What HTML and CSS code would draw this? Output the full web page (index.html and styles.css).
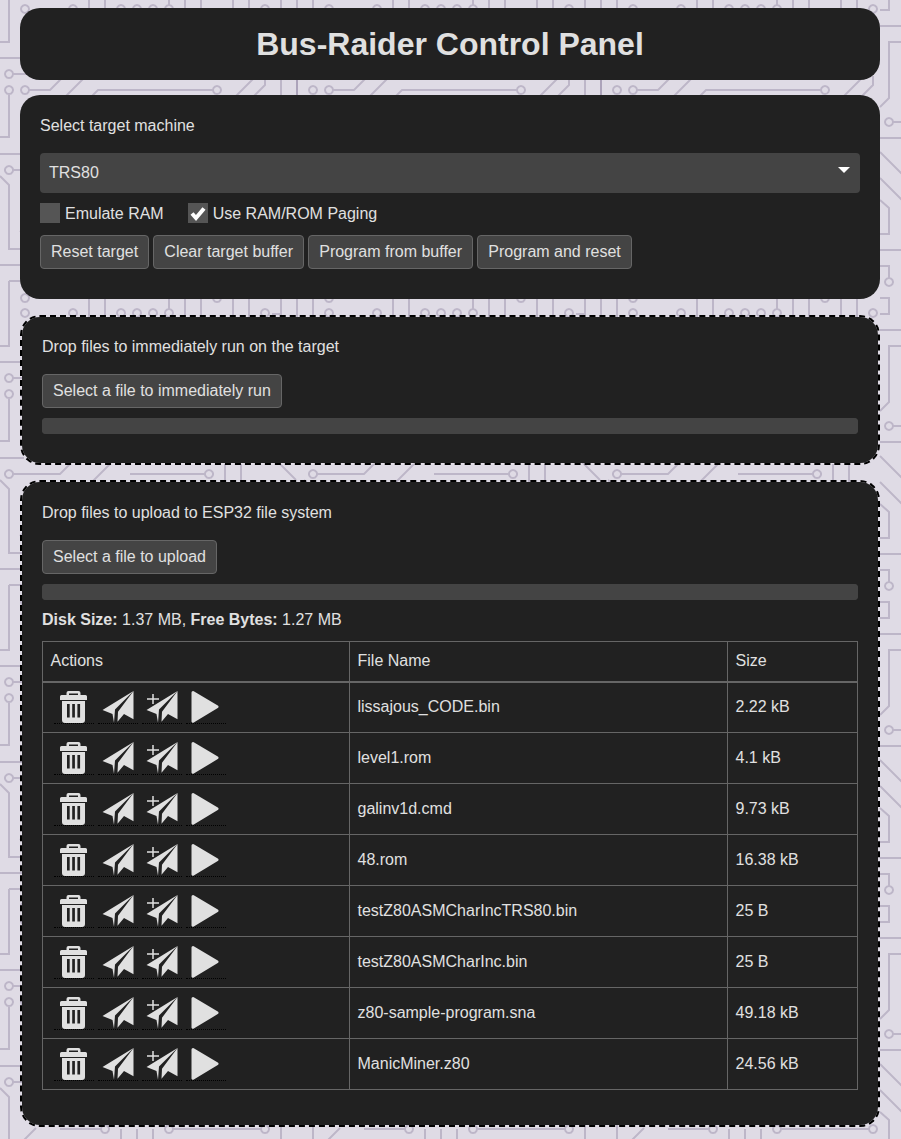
FILE: index.html
```html
<!doctype html>
<html>
  <head>
    <meta charset="utf-8">
    <meta name="viewport" content="width=device-width, initial-scale=1">
    <title>Bus-Raider Control Panel</title>
    <link rel="stylesheet" href="styles.css">
  </head>
  <body>
    <svg class="defs" width="0" height="0">
      <symbol id="i-trash" viewBox="0 0 40 33">
        <path fill-rule="evenodd" d="M12.500 5V3Q12.500 1 14.500 1H24.500Q26.500 1 26.500 3V5H31.500Q33 5 33 6.500V10H6V6.500Q6 5 7.500 5ZM15 5H24V3.500H15ZM8 11H31V30Q31 33 28 33H11Q8 33 8 30ZM13 14V27.500H15.700V14ZM18.200 14V27.500H20.900V14ZM23.400 14V27.500H26.100V14Z"/>
      </symbol>
      <symbol id="i-send" viewBox="0 0 40 33">
        <path d="M4.500 20 35.500 1 17 19.500 16 32.700 14.500 24Z"/>
        <path d="M35.500 1V29.300L26 24 19.500 31.700 20 21.700Z"/>
      </symbol>
      <symbol id="i-add" viewBox="0 0 40 33">
        <path d="M4.500 20 35.500 1 17 19.500 16 32.700 14.500 24Z"/>
        <path d="M35.500 1V29.300L26 24 19.500 31.700 20 21.700Z"/>
        <path d="M11 4V14M5 9H17" fill="none" stroke="#e0e0e0" stroke-width="1.500"/>
      </symbol>
      <symbol id="i-play" viewBox="0 0 40 33">
        <path d="M7 2.500 31 16.800 7 31.300Z" stroke="#e0e0e0" stroke-width="3" stroke-linejoin="round"/>
      </symbol>
    </svg>

    <header class="card title">
      <h1>Bus-Raider Control Panel</h1>
    </header>

    <section class="card machine">
      <p class="lead">Select target machine</p>
      <div class="select-wrap">
        <select id="machine">
          <option>TRS80</option>
        </select>
      </div>
      <div class="checks">
        <label class="check"><span class="box"></span>Emulate RAM</label>
        <label class="check"><span class="box"><svg width="20" height="20" viewBox="0 0 20 20"><path d="M4 10.500 8 15 16 5.500" fill="none" stroke="#fff" stroke-width="4"/></svg></span>Use RAM/ROM Paging</label>
      </div>
      <div class="buttons">
        <button>Reset target</button>
        <button>Clear target buffer</button>
        <button>Program from buffer</button>
        <button>Program and reset</button>
      </div>
    </section>

    <section class="card drop run-drop">
      <p class="lead">Drop files to immediately run on the target</p>
      <button>Select a file to immediately run</button>
      <progress value="0" max="100"></progress>
    </section>

    <section class="card drop fs-drop">
      <p class="lead">Drop files to upload to ESP32 file system</p>
      <button>Select a file to upload</button>
      <progress value="0" max="100"></progress>
      <p class="disk"><b>Disk Size:</b> 1.37 MB, <b>Free Bytes:</b> 1.27 MB</p>
      <table>
        <thead>
          <tr><th class="col-actions">Actions</th><th class="col-name">File Name</th><th>Size</th></tr>
        </thead>
        <tbody>
          <tr>
            <td><div class="actions"><a title="Delete"><svg><use href="#i-trash"/></svg></a><a title="Send"><svg><use href="#i-send"/></svg></a><a title="Add"><svg><use href="#i-add"/></svg></a><a title="Run"><svg><use href="#i-play"/></svg></a></div></td>
            <td>lissajous_CODE.bin</td><td>2.22 kB</td>
          </tr>
          <tr>
            <td><div class="actions"><a title="Delete"><svg><use href="#i-trash"/></svg></a><a title="Send"><svg><use href="#i-send"/></svg></a><a title="Add"><svg><use href="#i-add"/></svg></a><a title="Run"><svg><use href="#i-play"/></svg></a></div></td>
            <td>level1.rom</td><td>4.1 kB</td>
          </tr>
          <tr>
            <td><div class="actions"><a title="Delete"><svg><use href="#i-trash"/></svg></a><a title="Send"><svg><use href="#i-send"/></svg></a><a title="Add"><svg><use href="#i-add"/></svg></a><a title="Run"><svg><use href="#i-play"/></svg></a></div></td>
            <td>galinv1d.cmd</td><td>9.73 kB</td>
          </tr>
          <tr>
            <td><div class="actions"><a title="Delete"><svg><use href="#i-trash"/></svg></a><a title="Send"><svg><use href="#i-send"/></svg></a><a title="Add"><svg><use href="#i-add"/></svg></a><a title="Run"><svg><use href="#i-play"/></svg></a></div></td>
            <td>48.rom</td><td>16.38 kB</td>
          </tr>
          <tr>
            <td><div class="actions"><a title="Delete"><svg><use href="#i-trash"/></svg></a><a title="Send"><svg><use href="#i-send"/></svg></a><a title="Add"><svg><use href="#i-add"/></svg></a><a title="Run"><svg><use href="#i-play"/></svg></a></div></td>
            <td>testZ80ASMCharIncTRS80.bin</td><td>25 B</td>
          </tr>
          <tr>
            <td><div class="actions"><a title="Delete"><svg><use href="#i-trash"/></svg></a><a title="Send"><svg><use href="#i-send"/></svg></a><a title="Add"><svg><use href="#i-add"/></svg></a><a title="Run"><svg><use href="#i-play"/></svg></a></div></td>
            <td>testZ80ASMCharInc.bin</td><td>25 B</td>
          </tr>
          <tr>
            <td><div class="actions"><a title="Delete"><svg><use href="#i-trash"/></svg></a><a title="Send"><svg><use href="#i-send"/></svg></a><a title="Add"><svg><use href="#i-add"/></svg></a><a title="Run"><svg><use href="#i-play"/></svg></a></div></td>
            <td>z80-sample-program.sna</td><td>49.18 kB</td>
          </tr>
          <tr>
            <td><div class="actions"><a title="Delete"><svg><use href="#i-trash"/></svg></a><a title="Send"><svg><use href="#i-send"/></svg></a><a title="Add"><svg><use href="#i-add"/></svg></a><a title="Run"><svg><use href="#i-play"/></svg></a></div></td>
            <td>ManicMiner.z80</td><td>24.56 kB</td>
          </tr>
        </tbody>
      </table>
    </section>
  </body>
</html>
```

FILE: styles.css
```css
* {
  box-sizing: border-box;
}
html {
  background-color: #dfdbe5;
  background-image: url("data:image/svg+xml,%3Csvg xmlns='http://www.w3.org/2000/svg' width='304' height='304' fill='none' stroke='%239C92AC' stroke-opacity='.5' stroke-width='2'%3E%3Cpath d='M9 0V42H0M25 5a4 4 0 1 0 .01 0M73 5a4 4 0 1 0 .01 0M121 5a4 4 0 1 0 .01 0M137 5a4 4 0 1 0 .01 0M153 5a4 4 0 1 0 .01 0M169 5a4 4 0 1 0 .01 0M265 5a4 4 0 1 0 .01 0M169 0V5M89 0V20M105 0V20M185 0V20M201 0V20M233 0V20M249 0V20M297 0V20M89 290V304M105 290V304M185 290V304M201 290V304M233 290V304M249 290V304M297 290V304M169 296V304'/%3E%3Cpath d='M25 294a4 4 0 1 0 .01 0M217 294a4 4 0 1 0 .01 0'/%3E%3Cpath d='M0 58H24M9 70a4 4 0 1 0 .01 0M13 74H26M9 86a4 4 0 1 0 .01 0M25 86a4 4 0 1 0 .01 0M9 94V137H0M29 90H50L62 78M64 98 84 78M90 98 98 90H213M217 86a4 4 0 1 0 .01 0M234 98 254 78M265 76V85L254 96M297 76V100'/%3E%3Cpath d='M0 154H24M9 166a4 4 0 1 0 .01 0M13 170H60L70 160M90 180 110 160M130 170H205M209 166a4 4 0 1 0 .01 0M225 160V180M241 160V180M0 176 9 185V249H24M0 265H24M9 281H24M9 281V304'/%3E%3Cpath d='M105 213a4 4 0 1 0 .01 0M169 213a4 4 0 1 0 .01 0M265 213a4 4 0 1 0 .01 0M173 217H261M121 217V232M137 217V232M153 217V232M20 232 36 216M60 217H101'/%3E%3Cpath d='M281 0V10H272M272 26H304M304 42H281V98L272 107M281 118a4 4 0 1 0 .01 0M285 122H304M272 138H304M272 152 296 176M272 178 296 202M272 200 281 208V234H272M272 250H304M281 278V266H272M281 278a4 4 0 1 0 .01 0M272 298H281V304M297 76V100'/%3E%3C/svg%3E");
}
body {
  margin: 8px 21px 0 20px;
  font-family: "Liberation Sans", Arial, sans-serif;
  font-size: 16px;
  line-height: 20px;
  color: #e0e0e0;
}
.defs {
  display: block;
  height: 0;
}
.card {
  background: #212121;
  border-radius: 20px;
}
.title {
  height: 72px;
  margin-bottom: 15px;
  display: flex;
  align-items: center;
  justify-content: center;
}
h1 {
  margin: 0;
  font-size: 32px;
  line-height: 36px;
  font-weight: bold;
}
.machine {
  height: 204px;
  margin-bottom: 16px;
  padding: 20px;
}
.lead {
  margin: 0 0 17px;
  padding-top: 1px;
}
.select-wrap {
  position: relative;
  margin-bottom: 10px;
}
.select-wrap::after {
  content: "";
  position: absolute;
  top: 14px;
  right: 10px;
  border-left: 6px solid transparent;
  border-right: 6px solid transparent;
  border-top: 6px solid #fff;
}
select {
  display: block;
  width: 100%;
  height: 40px;
  padding: 0 9px;
  border: 0;
  border-radius: 4px;
  background: #444;
  color: #e0e0e0;
  font: inherit;
  appearance: none;
}
.checks {
  display: flex;
  gap: 24px;
  margin-bottom: 10px;
}
.check {
  display: flex;
  align-items: flex-start;
  gap: 5px;
  line-height: 22px;
}
.box {
  display: block;
  width: 20px;
  height: 20px;
  background: #555;
}
.box svg {
  display: block;
}
.buttons {
  display: flex;
  gap: 4.2px;
}
button {
  display: block;
  height: 34px;
  padding: 0 10px;
  border: 1px solid #666;
  border-radius: 4px;
  background: #444;
  color: #e0e0e0;
  font: inherit;
  cursor: pointer;
}
.drop {
  padding: 19px 20px 0;
  border: 2px dashed #000;
  background-clip: padding-box;
}
.run-drop {
  height: 150px;
  margin-bottom: 15px;
}
.fs-drop {
  height: 647px;
  padding-top: 20px;
}
progress {
  display: block;
  width: 100%;
  height: 16px;
  margin-top: 10px;
  border: 0;
  border-radius: 4px;
  background: #444;
  appearance: none;
}
progress::-webkit-progress-bar {
  background: #444;
  border-radius: 4px;
}
progress::-webkit-progress-value {
  background: #4a8;
}
.disk {
  margin: 0;
  padding: 10px 0 12px;
  height: 41px;
}
table {
  width: 816px;
  border-collapse: collapse;
  table-layout: fixed;
}
th, td {
  border: 1px solid #666;
  padding: 0 8px 0 7.5px;
  text-align: left;
  font-weight: normal;
}
th {
  height: 40px;
  border-bottom-width: 2px;
}
td {
  height: 51px;
}
.col-actions {
  width: 307px;
}
.col-name {
  width: 378px;
}
.actions {
  display: flex;
  gap: 4px;
  padding: 0 0 0 3px;
}
.actions a {
  display: block;
  width: 40px;
  height: 34px;
  border-bottom: 1px dotted #000;
}
.actions svg {
  display: block;
  width: 40px;
  height: 33px;
  fill: #e0e0e0;
}
```
